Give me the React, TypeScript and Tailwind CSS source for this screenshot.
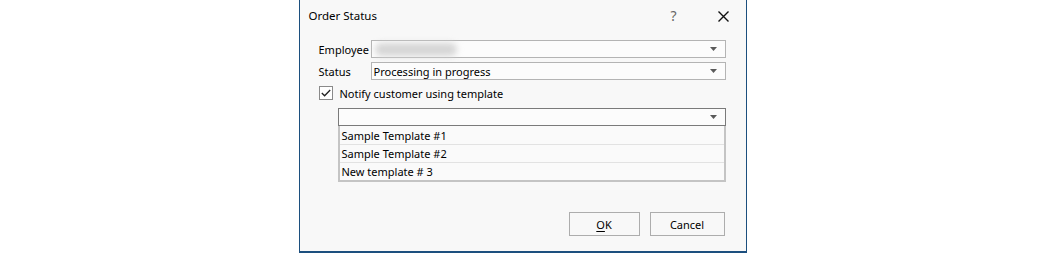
import React from 'react';

function Arrow() {
  return (
    <svg width="8" height="5" viewBox="0 0 8 5" className="shrink-0">
      <path d="M0 0h7L3.5 4z" fill="#5a5a5a" />
    </svg>
  );
}

function Combo({
  children,
  className = '',
}: {
  children?: React.ReactNode;
  className?: string;
}) {
  return (
    <div
      className={`flex h-[18px] items-center justify-between border bg-[#fcfcfc] pl-[2px] pr-[7px] ${className}`}
    >
      <div className="flex min-w-0 items-center">{children}</div>
      <Arrow />
    </div>
  );
}

const templates = ['Sample Template #1', 'Sample Template #2', 'New template # 3'];

export default function App() {
  return (
    <div
      className="flex h-[253px] w-full justify-center bg-white text-[11px] text-black"
      style={{ fontFamily: '"Noto Sans", "Open Sans", sans-serif' }}
    >
      <div className="flex h-[253px] w-[448px] flex-col border-x border-b-2 border-[#1c4f7e] bg-[#f8f8f8]">
        {/* title bar */}
        <div className="flex h-[32px] shrink-0 items-center pl-[9px]">
          <span className="text-[11.5px] leading-none">Order Status</span>
          <span className="ml-auto mr-[41px] text-[14px] leading-none text-[#666]">?</span>
          <svg width="11" height="11" viewBox="0 0 11 11" className="mr-[17px]">
            <path d="M0.5 0.5L10.5 10.5M10.5 0.5L0.5 10.5" stroke="#111" strokeWidth="1.4" />
          </svg>
        </div>

        <div className="flex flex-col pl-[19px] pr-[20px] pt-[8px]">
          <div className="flex items-center">
            <span className="w-[52px] leading-none">Employee</span>
            <Combo className="flex-1 border-[#b4b4b4]">
              <div className="ml-[1px] h-[13px] w-[82px] rounded-full bg-[#d6d6d6] blur-[3px]" />
            </Combo>
          </div>
          <div className="mt-[4px] flex items-center">
            <span className="w-[52px] leading-none">Status</span>
            <Combo className="flex-1 border-[#b4b4b4]">
              <span className="leading-none">Processing in progress</span>
            </Combo>
          </div>

          <div className="mt-[6px] flex items-center">
            <div className="flex h-[14px] w-[14px] items-center justify-center border border-[#8a8a8a] bg-white">
              <svg width="10" height="8" viewBox="0 0 10 8">
                <path d="M0.8 4L3.6 6.8L9.2 1" stroke="#222" strokeWidth="1.3" fill="none" />
              </svg>
            </div>
            <span className="ml-[7px] leading-none">Notify customer using template</span>
          </div>

          <div className="ml-[19px] mt-[8px] flex flex-col">
            <Combo className="border-[#7a7a7a]" />
            <div className="flex flex-col border-x-2 border-b-2 border-[#c4c4c4] bg-[#fafafa]">
              {templates.map((t, i) => (
                <div
                  key={t}
                  className={`flex h-[18px] items-center pl-[2px] ${i > 0 ? 'border-t border-[#e2e2e2]' : ''}`}
                >
                  <span className="leading-none">{t}</span>
                </div>
              ))}
            </div>
          </div>
        </div>

        <div className="mt-auto mb-[15px] flex justify-end gap-[10px] pr-[21px]">
          <button className="flex h-[24px] w-[71px] items-center justify-center border border-[#adadad] bg-[#f8f8f8] leading-none">
            <span className="underline underline-offset-2">O</span>K
          </button>
          <button className="flex h-[24px] w-[75px] items-center justify-center border border-[#adadad] bg-[#f8f8f8] leading-none">
            Cancel
          </button>
        </div>
      </div>
    </div>
  );
}
